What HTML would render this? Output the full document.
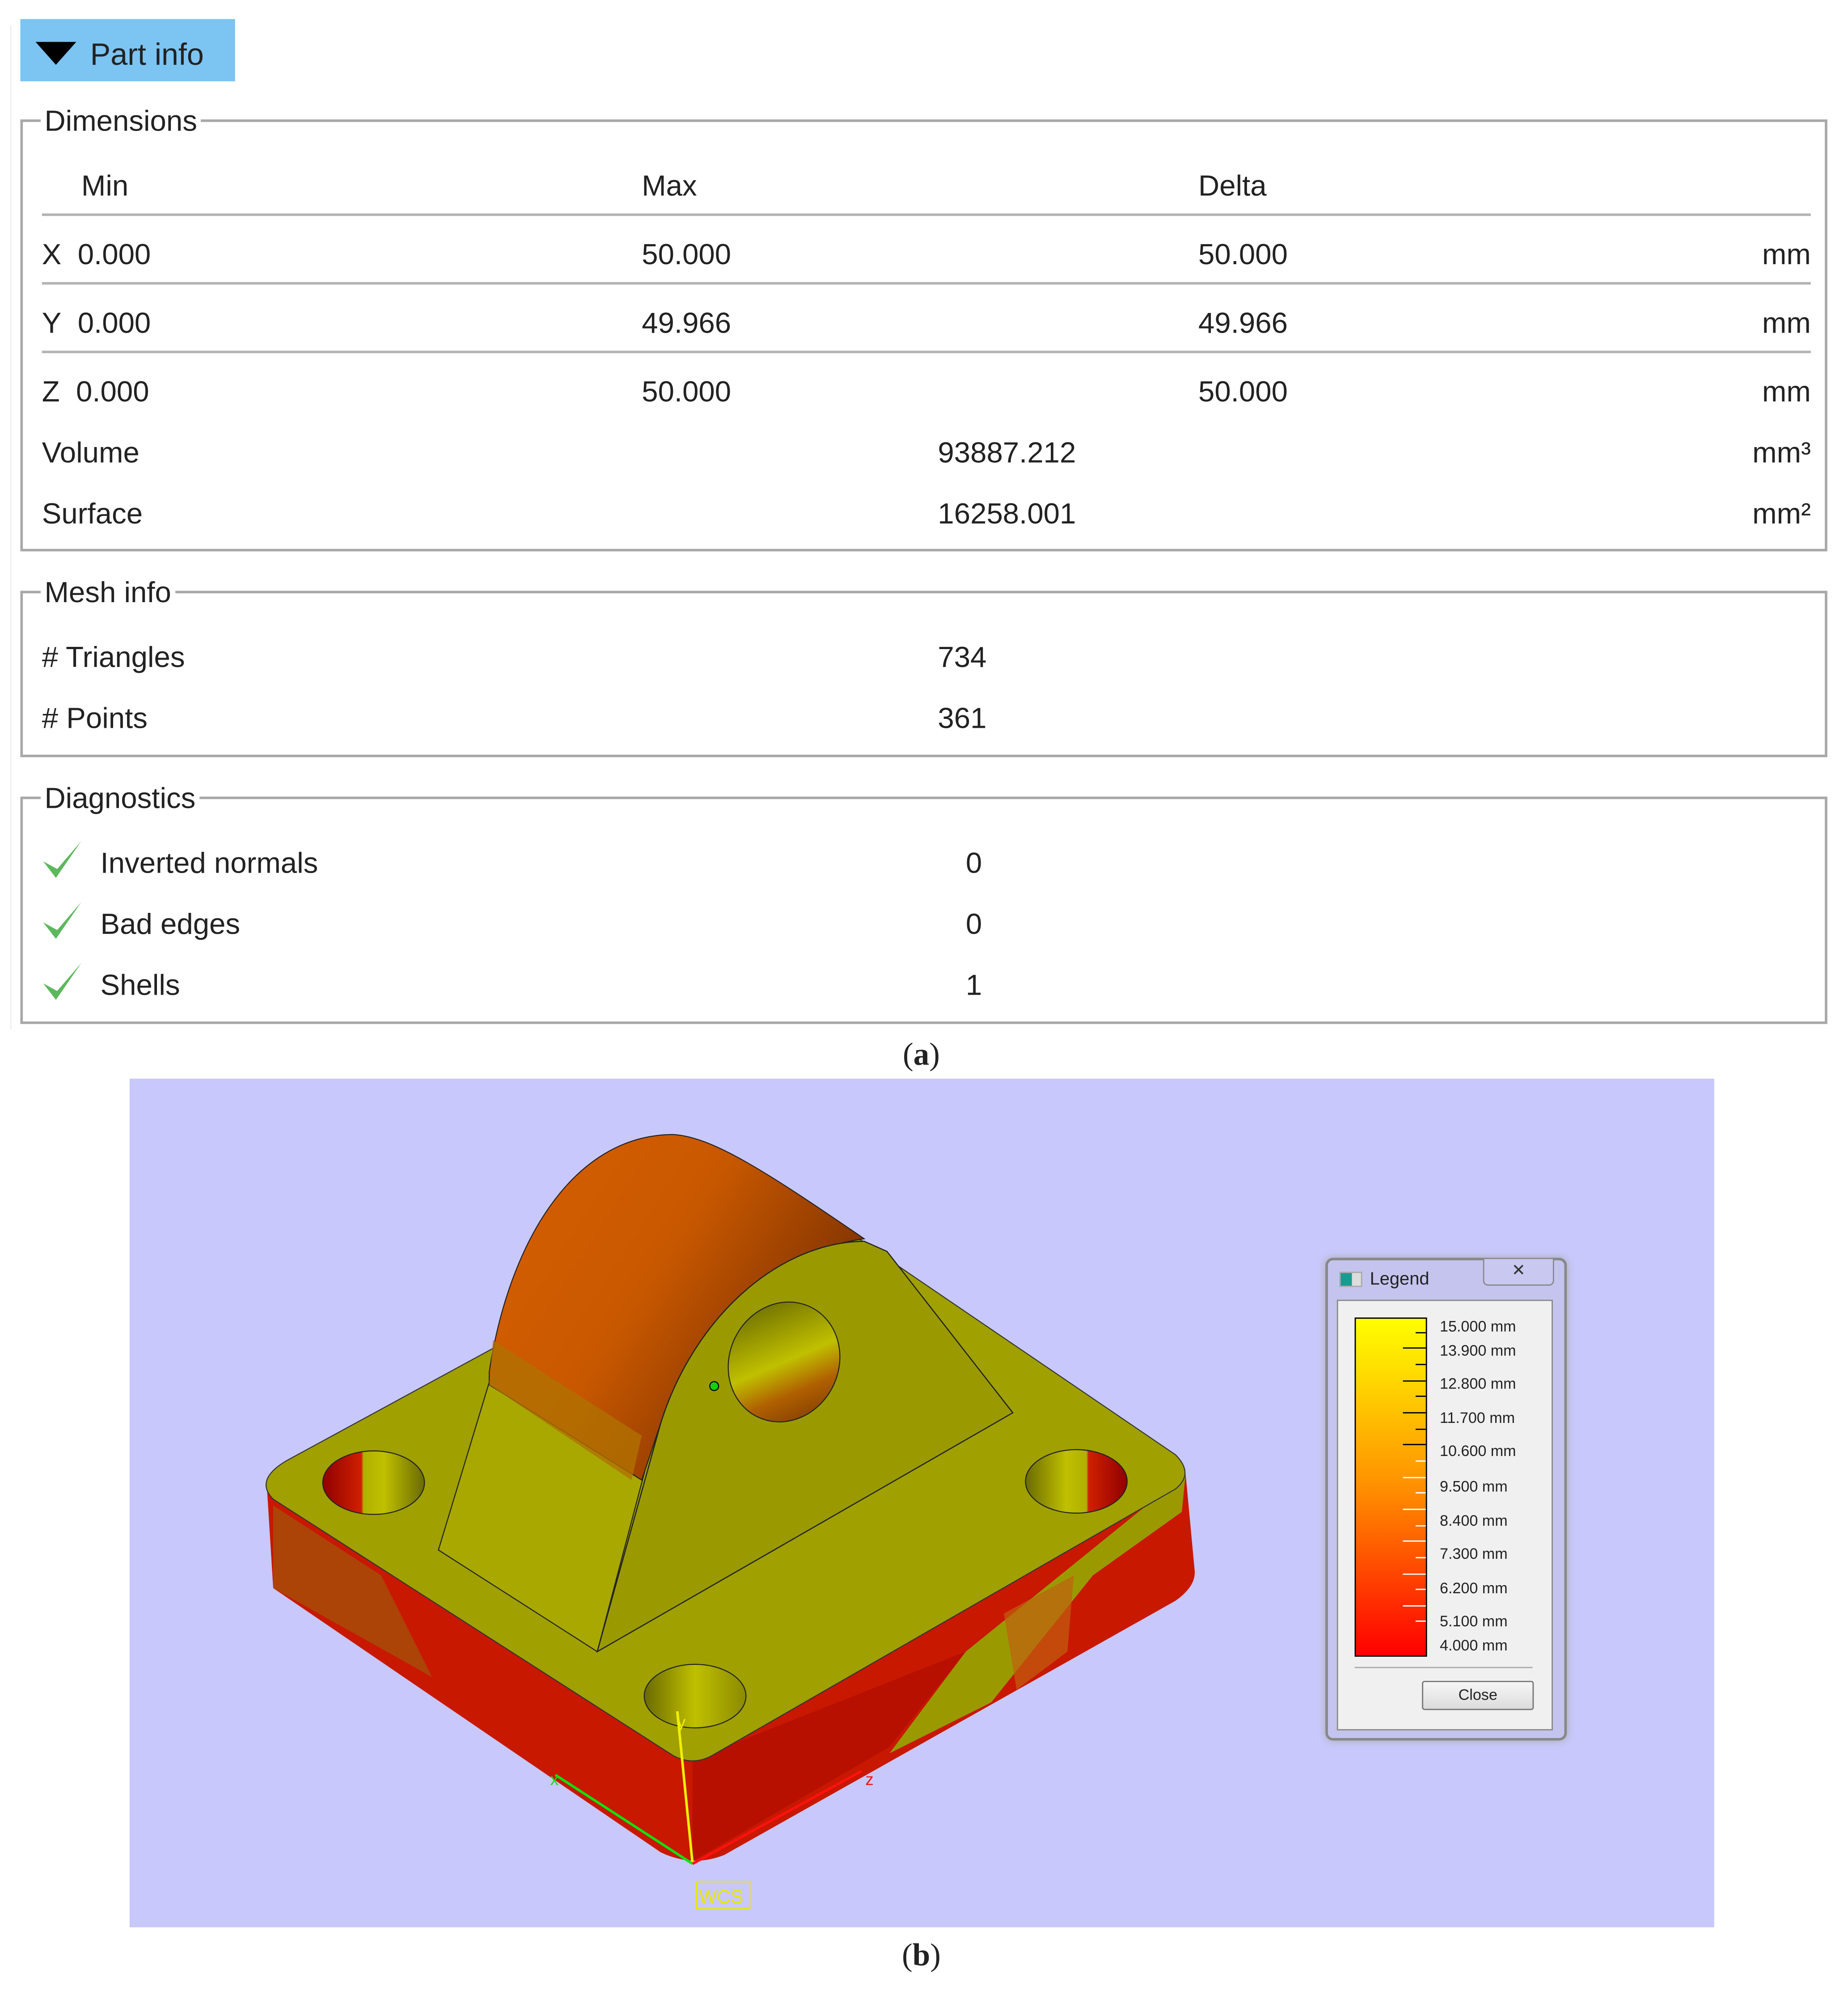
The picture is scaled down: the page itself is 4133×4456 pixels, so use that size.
<!DOCTYPE html>
<html><head><meta charset="utf-8"><style>
html,body{margin:0;padding:0;background:#fff;}
body{width:4133px;height:4455px;overflow:hidden;position:relative;}
#w{position:absolute;left:0;top:0;width:1455px;height:1568px;transform:scale(2.842);transform-origin:0 0;font-family:"Liberation Sans",sans-serif;color:#222;}
.t{position:absolute;font-size:23px;line-height:1;white-space:nowrap;}
.box{position:absolute;border:2px solid #a8a8a8;}
.lg{position:absolute;background:#fff;padding:0 3px;font-size:23px;line-height:1;}
.hl{position:absolute;height:2px;background:#b4b4b4;left:33px;width:1392px;}
.r{text-align:right;}
.ck{position:absolute;}
.cap{position:absolute;font-family:"Liberation Serif",serif;font-size:25px;width:60px;text-align:center;}
.ll{position:absolute;font-size:12px;left:1133px;color:#222;}
</style></head><body><div id="w">

<div style="position:absolute;left:16px;top:15px;width:169px;height:49px;background:#7cc4f2;"></div>
<svg style="position:absolute;left:26px;top:32px" width="36" height="20"><polygon points="2,1 34,1 18,19" fill="#000"/></svg>
<div class="t" style="left:71px;top:32px;font-size:24px;">Part info</div>
<div style="position:absolute;left:8px;top:20px;width:1px;height:790px;background:#eee"></div>

<div class="box" style="left:16px;top:94px;width:1418px;height:336px;"></div>
<div class="lg" style="left:32px;top:84px;">Dimensions</div>
<div class="t" style="left:64px;top:135px;">Min</div>
<div class="t" style="left:505px;top:135px;">Max</div>
<div class="t" style="left:943px;top:135px;">Delta</div>
<div class="hl" style="top:168px;"></div>
<div class="t" style="left:33px;top:189px;">X&nbsp; 0.000</div>
<div class="t" style="left:505px;top:189px;">50.000</div>
<div class="t" style="left:943px;top:189px;">50.000</div>
<div class="t r" style="left:1325px;width:100px;top:189px;">mm</div>
<div class="hl" style="top:222px;"></div>
<div class="t" style="left:33px;top:243px;">Y&nbsp; 0.000</div>
<div class="t" style="left:505px;top:243px;">49.966</div>
<div class="t" style="left:943px;top:243px;">49.966</div>
<div class="t r" style="left:1325px;width:100px;top:243px;">mm</div>
<div class="hl" style="top:276px;"></div>
<div class="t" style="left:33px;top:297px;">Z&nbsp; 0.000</div>
<div class="t" style="left:505px;top:297px;">50.000</div>
<div class="t" style="left:943px;top:297px;">50.000</div>
<div class="t r" style="left:1325px;width:100px;top:297px;">mm</div>
<div class="t" style="left:33px;top:345px;">Volume</div>
<div class="t" style="left:738px;top:345px;">93887.212</div>
<div class="t r" style="left:1325px;width:100px;top:345px;">mm³</div>
<div class="t" style="left:33px;top:393px;">Surface</div>
<div class="t" style="left:738px;top:393px;">16258.001</div>
<div class="t r" style="left:1325px;width:100px;top:393px;">mm²</div>

<div class="box" style="left:16px;top:465px;width:1418px;height:127px;"></div>
<div class="lg" style="left:32px;top:455px;">Mesh info</div>
<div class="t" style="left:33px;top:506px;"># Triangles</div>
<div class="t" style="left:738px;top:506px;">734</div>
<div class="t" style="left:33px;top:554px;"># Points</div>
<div class="t" style="left:738px;top:554px;">361</div>

<div class="box" style="left:16px;top:627px;width:1418px;height:175px;"></div>
<div class="lg" style="left:32px;top:617px;">Diagnostics</div>
<svg class="ck" style="left:32px;top:660px" width="34" height="34"><path d="M2,18 L12,31 L32,2 L13,24 Z" fill="#5cb85c"/></svg>
<svg class="ck" style="left:32px;top:708px" width="34" height="34"><path d="M2,18 L12,31 L32,2 L13,24 Z" fill="#5cb85c"/></svg>
<svg class="ck" style="left:32px;top:756px" width="34" height="34"><path d="M2,18 L12,31 L32,2 L13,24 Z" fill="#5cb85c"/></svg>
<div class="t" style="left:79px;top:668px;">Inverted normals</div>
<div class="t" style="left:760px;top:668px;">0</div>
<div class="t" style="left:79px;top:716px;">Bad edges</div>
<div class="t" style="left:760px;top:716px;">0</div>
<div class="t" style="left:79px;top:764px;">Shells</div>
<div class="t" style="left:760px;top:764px;">1</div>

<div class="cap" style="left:695px;top:817px;">(<b>a</b>)</div>

<div style="position:absolute;left:102px;top:849px;width:1247px;height:668px;background:#c8c8fc;"></div>
<svg style="position:absolute;left:0;top:0" width="1450" height="1563">
<defs>
<linearGradient id="holeL" x1="0" x2="1"><stop offset="0" stop-color="#900000"/><stop offset=".38" stop-color="#d02000"/><stop offset=".4" stop-color="#b0b000"/><stop offset=".6" stop-color="#c0c000"/><stop offset="1" stop-color="#6a6a00"/></linearGradient>
<linearGradient id="holeR" x1="0" x2="1"><stop offset="0" stop-color="#6a6a00"/><stop offset=".4" stop-color="#c0c000"/><stop offset=".6" stop-color="#b0b000"/><stop offset=".62" stop-color="#d02000"/><stop offset="1" stop-color="#900000"/></linearGradient>
<linearGradient id="hole2" x1="0" x2="1"><stop offset="0" stop-color="#6a6a00"/><stop offset=".5" stop-color="#c0c000"/><stop offset="1" stop-color="#8a8a00"/></linearGradient>
<linearGradient id="arch" x1="0" y1="0" x2="1" y2="0.6"><stop offset="0" stop-color="#d86000"/><stop offset=".5" stop-color="#c85800"/><stop offset=".85" stop-color="#8a3800"/><stop offset="1" stop-color="#3a1800"/></linearGradient>
<linearGradient id="ph" x1="0" y1="0" x2="1" y2="1"><stop offset="0" stop-color="#5a5a00"/><stop offset=".5" stop-color="#c0c000"/><stop offset=".7" stop-color="#b06000"/><stop offset="1" stop-color="#703000"/></linearGradient>
</defs>
<path d="M210,1170 L215,1250 L520,1458 Q545,1470 570,1460 L925,1260 Q942,1248 940,1235 L933,1160 L545,1385 Z" fill="#c81800"/>
<path d="M215,1250 L215,1185 L300,1240 L340,1320 Z" fill="#8a7a10" opacity=".45"/>
<path d="M545,1385 L545,1465 L700,1375 L760,1300 Z" fill="#b81000"/>
<path d="M760,1300 L700,1380 L780,1340 L860,1240 L930,1190 L933,1160 Z" fill="#9a9a00"/>
<path d="M790,1270 L800,1330 L840,1300 L845,1240 Z" fill="#c06010" opacity=".7"/>
<path d="M225,1150 L620,935 L690,985 L925,1145 Q940,1160 925,1172 L560,1382 Q545,1390 530,1382 L215,1180 Q200,1165 225,1150 Z" fill="#a0a000" stroke="#333" stroke-width=".8"/>
<ellipse cx="294" cy="1167" rx="40" ry="25" fill="url(#holeL)" stroke="#222" stroke-width=".8"/>
<ellipse cx="847" cy="1166" rx="40" ry="25" fill="url(#holeR)" stroke="#222" stroke-width=".8"/>
<ellipse cx="547" cy="1335" rx="40" ry="25" fill="url(#hole2)" stroke="#222" stroke-width=".8"/>
<path d="M345,1220 L395,1055 L520,1110 L470,1300 Z" fill="#a8a800" stroke="#222" stroke-width=".8"/>
<path d="M385,1080 C400,980 450,893 530,893 C560,895 600,920 680,975 C610,985 545,1040 520,1120 L505,1165 L385,1090 Z" fill="url(#arch)" stroke="#222" stroke-width=".8"/>
<path d="M388,1055 L505,1130 L497,1165 L385,1090 Z" fill="#b07000" opacity=".8"/>
<path d="M470,1300 L520,1120 C545,1040 610,978 680,977 L698,985 L797,1112 Z" fill="#9a9a00" stroke="#222" stroke-width=".9"/>
<ellipse cx="617" cy="1072" rx="43" ry="48" transform="rotate(25 617 1072)" fill="url(#ph)" stroke="#222" stroke-width=".8"/>
<circle cx="562" cy="1091" r="3.5" fill="#10d010" stroke="#000" stroke-width=".8"/>
<line x1="545" y1="1467" x2="533" y2="1347" stroke="#f0f000" stroke-width="2"/>
<line x1="545" y1="1467" x2="437" y2="1397" stroke="#10e010" stroke-width="2"/>
<line x1="545" y1="1467" x2="678" y2="1394" stroke="#ff1010" stroke-width="2"/>
<text x="533" y="1360" font-size="13" fill="#f0f000" font-family="Liberation Sans">y</text>
<text x="433" y="1405" font-size="13" fill="#10e010" font-family="Liberation Sans">x</text>
<text x="681" y="1405" font-size="13" fill="#ff1010" font-family="Liberation Sans">z</text>
<rect x="548" y="1481" width="42" height="21" fill="none" stroke="#e8e800" stroke-width="1"/>
<text x="550" y="1498" font-size="15" fill="#e8e800" font-family="Liberation Sans">WCS</text>
</svg>

<div style="position:absolute;left:1043px;top:990px;width:186px;height:376px;background:#c4c4ee;border:2px solid #888;border-radius:6px;box-shadow:0 0 6px #aaa;"></div>
<div style="position:absolute;left:1054px;top:1001px;width:16px;height:10px;background:linear-gradient(90deg,#1a9a90 55%,#ddd 55%);border:1px solid #aaa;"></div>
<div style="position:absolute;left:1078px;top:998px;font-size:14px;color:#222;">Legend</div>
<div style="position:absolute;left:1167px;top:991px;width:54px;height:20px;border:1px solid #888;border-top:none;border-radius:0 0 4px 4px;background:#c8c8f0;font-size:13px;text-align:center;color:#333;line-height:18px;">✕</div>
<div style="position:absolute;left:1052px;top:1023px;width:168px;height:337px;background:#f0f0f0;border:1px solid #888;"></div>
<div style="position:absolute;left:1066px;top:1037px;width:55px;height:265px;border:1px solid #000;background:linear-gradient(#ffff00,#ff9000 50%,#ff0000);"></div>
<svg style="position:absolute;left:1100px;top:1037px" width="24" height="268">
<g stroke="#000" stroke-width="1"><line x1="14" y1="12" x2="22" y2="12"/><line x1="4" y1="24" x2="22" y2="24"/><line x1="14" y1="37" x2="22" y2="37"/><line x1="4" y1="50" x2="22" y2="50"/><line x1="14" y1="62" x2="22" y2="62"/><line x1="4" y1="75" x2="22" y2="75"/><line x1="14" y1="88" x2="22" y2="88"/><line x1="4" y1="100" x2="22" y2="100"/></g>
<g stroke="#fff" stroke-width="1"><line x1="14" y1="113" x2="22" y2="113"/><line x1="4" y1="126" x2="22" y2="126"/><line x1="14" y1="138" x2="22" y2="138"/><line x1="4" y1="151" x2="22" y2="151"/><line x1="14" y1="164" x2="22" y2="164"/><line x1="4" y1="176" x2="22" y2="176"/><line x1="14" y1="189" x2="22" y2="189"/><line x1="4" y1="202" x2="22" y2="202"/><line x1="14" y1="214" x2="22" y2="214"/><line x1="4" y1="227" x2="22" y2="227"/><line x1="14" y1="239" x2="22" y2="239"/></g>
</svg>
<div class="ll" style="top:1037px;">15.000 mm</div>
<div class="ll" style="top:1056px;">13.900 mm</div>
<div class="ll" style="top:1082px;">12.800 mm</div>
<div class="ll" style="top:1109px;">11.700 mm</div>
<div class="ll" style="top:1135px;">10.600 mm</div>
<div class="ll" style="top:1163px;">9.500 mm</div>
<div class="ll" style="top:1190px;">8.400 mm</div>
<div class="ll" style="top:1216px;">7.300 mm</div>
<div class="ll" style="top:1243px;">6.200 mm</div>
<div class="ll" style="top:1269px;">5.100 mm</div>
<div class="ll" style="top:1288px;">4.000 mm</div>
<div style="position:absolute;left:1066px;top:1312px;width:140px;height:1px;background:#aaa;"></div>
<div style="position:absolute;left:1119px;top:1323px;width:86px;height:21px;border:1px solid #777;border-radius:2px;background:linear-gradient(#f6f6f6,#dcdcdc);font-size:12px;text-align:center;line-height:21px;color:#222;">Close</div>

<div class="cap" style="left:695px;top:1526px;">(<b>b</b>)</div>
</div></body></html>
